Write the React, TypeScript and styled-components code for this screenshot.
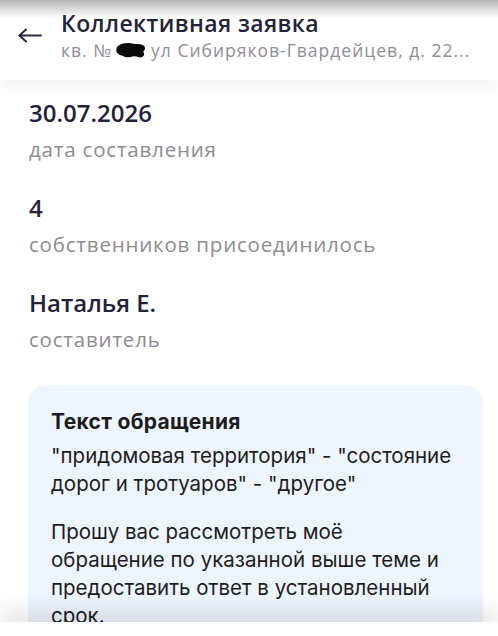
import React from 'react';
import styled, {createGlobalStyle} from 'styled-components';

const Global = createGlobalStyle`
	html, body {
		margin: 0;
		padding: 0;
		background: #ffffff;
		height: 636px;
		overflow: hidden;
	}
	* {
		box-sizing: border-box;
	}
`;

const Screen = styled.div`
	position: relative;
	width: 498px;
	height: 636px;
	overflow: hidden;
	background: #ffffff;
	font-family: "Open Sans", "Noto Sans", sans-serif;
`;

const StatusShade = styled.div`
	position: absolute;
	top: 0;
	left: 0;
	right: 0;
	height: 18px;
	background: linear-gradient(to bottom, rgba(120,120,120,.55), rgba(255,255,255,0));
	pointer-events: none;
	z-index: 3;
`;

const Header = styled.header`
	position: relative;
	z-index: 2;
	display: flex;
	align-items: center;
	gap: 19px;
	height: 80px;
	padding: 0 0 10px 18px;
	background: #ffffff;
	box-shadow: 0 10px 14px rgba(0,0,0,.035);
`;

const BackButton = styled.button`
	display: flex;
	align-items: center;
	justify-content: center;
	width: 24px;
	height: 24px;
	padding: 0;
	border: 0;
	background: none;
	color: #2a2b40;
`;

const HeaderText = styled.div`
	display: flex;
	flex-direction: column;
	min-width: 0;
	flex: 1;
	padding-right: 8px;
`;

const Title = styled.h1`
	margin: 0;
	font-size: 23px;
	line-height: 28px;
	font-weight: 600;
	color: #23243a;
	letter-spacing: 0.4px;
`;

const Subtitle = styled.div`
	display: flex;
	align-items: center;
	margin-top: 2px;
	font-size: 17.5px;
	line-height: 22px;
	color: #8e8e96;
	white-space: nowrap;
	letter-spacing: 1px;
`;

const Content = styled.main`
	display: flex;
	flex-direction: column;
	gap: 31px;
	padding: 18px 15px 0 29px;
`;

const Field = styled.div`
	display: flex;
	flex-direction: column;
	gap: 8px;
`;

const Value = styled.div`
	font-size: 24px;
	line-height: 30px;
	font-weight: 600;
	color: #22233a;
`;

const Label = styled.div`
	font-size: 20.5px;
	line-height: 26px;
	color: #8c8c92;
	letter-spacing: 0.8px;
`;

const Card = styled.section`
	margin: 2px 0 0 -1px;
	padding: 24px 20px 40px 23px;
	border-radius: 18px;
	background: #eff5fc;
	font-family: Inter, Roboto, sans-serif;
	color: #1d1d1f;
`;

const CardTitle = styled.h2`
	margin: 0 0 7px;
	font-size: 21px;
	line-height: 26px;
	font-weight: 700;
	letter-spacing: 0.3px;
`;

const Paragraph = styled.p`
	margin: 0 0 20px;
	font-size: 20.5px;
	line-height: 28px;
	font-weight: 400;
`;

const BottomBar = styled.div`
	position: absolute;
	left: 0;
	right: 0;
	bottom: 0;
	height: 14px;
	background: #ffffff;
	box-shadow: 0 -8px 22px rgba(0,0,0,.16);
	z-index: 3;
`;

const ArrowIcon = () => (
	<svg width="24" height="15" viewBox="0 0 24 15" fill="none" stroke="currentColor" strokeWidth="2" strokeLinecap="round" strokeLinejoin="round">
		<path d="M23 7.5H1.5" />
		<path d="M8 1.5L1.5 7.5 8 13.5" />
	</svg>
);

// redacted flat number scribble
const Redacted = () => (
	<svg width="32" height="18" viewBox="0 0 34 18" style={{margin: '0 4px 0 3px', flex: 'none'}}>
		<path d="M2 6c3-4 10-5 16-4 5 1 9 0 12 2 3 2 2 5 0 7 2 2 1 5-3 6-3 0-5-2-8-1-4 1-8 1-11-1C3 14 0 11 2 6z" fill="#0a0a0a" />
	</svg>
);

const fields = [
	{value: '30.07.2026', label: 'дата составления'},
	{value: '4', label: 'собственников присоединилось'},
	{value: 'Наталья Е.', label: 'составитель'},
];

const App = () => (
	<Screen>
		<Global />
		<StatusShade />
		<Header>
			<BackButton aria-label="Назад">
				<ArrowIcon />
			</BackButton>
			<HeaderText>
				<Title>Коллективная заявка</Title>
				<Subtitle>
					кв. №
					<Redacted />
					ул Сибиряков-Гвардейцев, д. 22...
				</Subtitle>
			</HeaderText>
		</Header>
		<Content>
			{fields.map((f) => (
				<Field key={f.label}>
					<Value>{f.value}</Value>
					<Label>{f.label}</Label>
				</Field>
			))}
			<Card>
				<CardTitle>Текст обращения</CardTitle>
				<Paragraph>"придомовая территория" - "состояние дорог и тротуаров" - "другое"</Paragraph>
				<Paragraph>
					Прошу вас рассмотреть моё<br />
					обращение по указанной выше теме и предоставить ответ в установленный срок.
				</Paragraph>
			</Card>
		</Content>
		<BottomBar />
	</Screen>
);

export default App;
